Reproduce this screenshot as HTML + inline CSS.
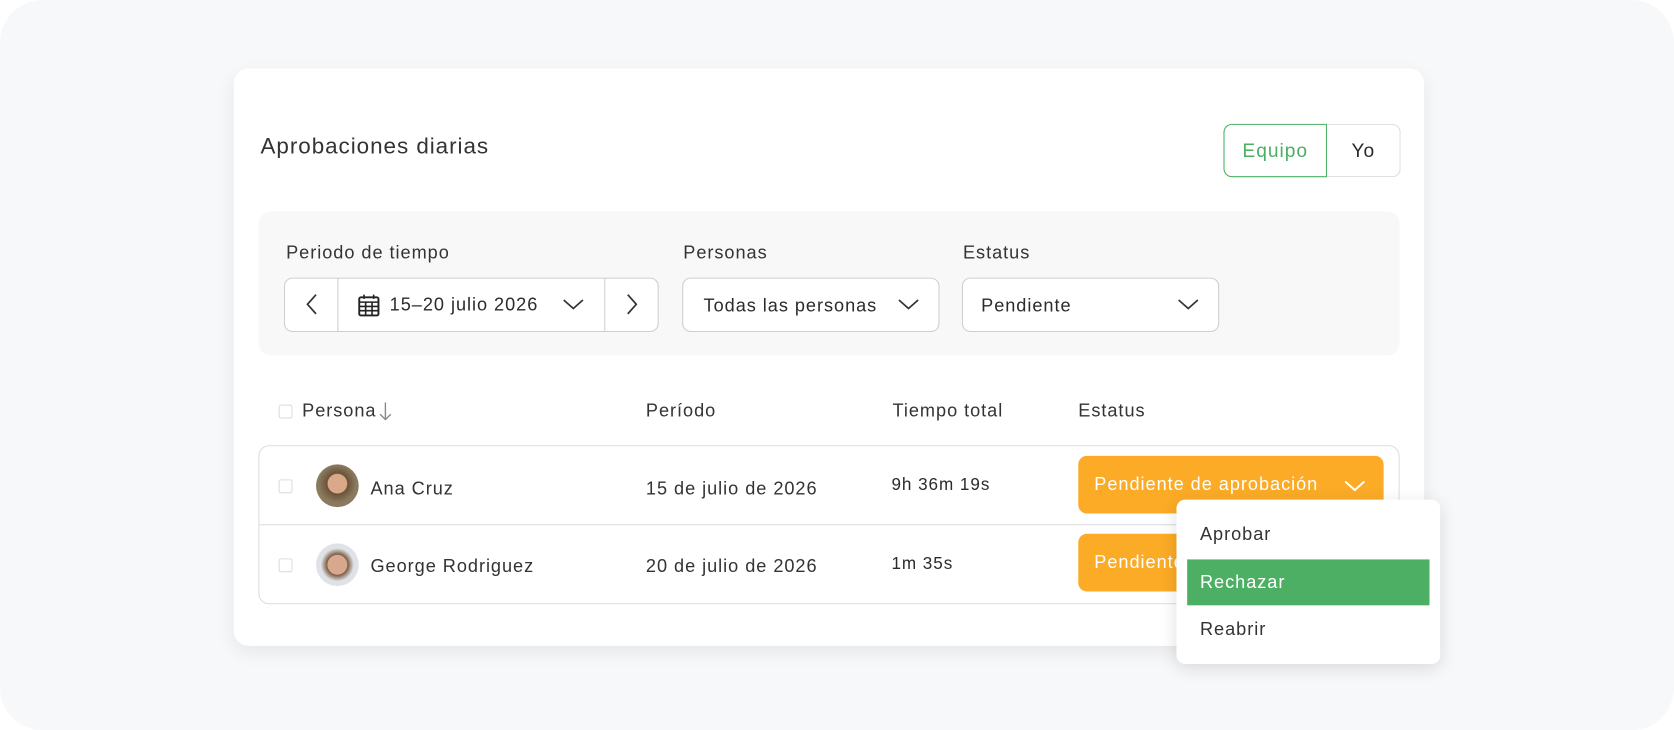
<!DOCTYPE html>
<html><head><meta charset="utf-8"><style>
*{box-sizing:border-box;margin:0;padding:0}
html,body{width:1674px;height:730px;overflow:hidden;background:#fff}
#w{position:absolute;left:0;top:0;width:1568px;height:684px;transform:scale(1.0676);transform-origin:0 0;font-family:"Liberation Sans",sans-serif;color:#2b2b2b;letter-spacing:0.9px}
.bg{position:absolute;left:0;top:0;width:1568px;height:684px;background:#f7f8fa;border-radius:40px}
.card{position:absolute;left:219px;top:64px;width:1115px;height:541px;background:#fff;border-radius:14px;box-shadow:0 6px 18px rgba(0,0,0,.07)}
.a{position:absolute;white-space:nowrap}
.t{font-size:17px;color:#333}
.box{position:absolute;border:1px solid #cfcfcf;border-radius:8px;background:#fff;height:51px}
.cb{position:absolute;width:13px;height:13px;border:1px solid #ddd;border-radius:2px}
.av{position:absolute;width:40px;height:40px;border-radius:50%}
.pill{position:absolute;background:#fbab26;border-radius:8px;color:#fff;font-size:17px}
</style></head><body><div id="w">
<div class="bg"></div>
<div class="card"></div>
<div class="a" style="left:244px;top:126px;font-size:21px;color:#333">Aprobaciones diarias</div>
<div class="a" style="left:1146px;top:116px;width:97px;height:50px;border:1.5px solid #4caf63;border-radius:8px 0 0 8px;color:#4caf63;font-size:18px;text-align:center;line-height:48px">Equipo</div>
<div class="a" style="left:1243px;top:116px;width:69px;height:50px;border:1.5px solid #ddd;border-left:none;border-radius:0 8px 8px 0;font-size:18px;text-align:center;line-height:48px">Yo</div>
<div class="a" style="left:242px;top:198px;width:1069px;height:135px;background:#f8f8f8;border-radius:12px"></div>
<div class="a t" style="left:268px;top:227px">Periodo de tiempo</div>
<div class="a t" style="left:640px;top:227px">Personas</div>
<div class="a t" style="left:902px;top:227px">Estatus</div>
<div class="box" style="left:266px;top:260px;width:351px"></div>
<div class="a" style="left:316px;top:260px;width:1px;height:51px;background:#cfcfcf"></div>
<div class="a" style="left:566px;top:260px;width:1px;height:51px;background:#cfcfcf"></div>
<svg class="a" style="left:284px;top:274px" width="16" height="22"><path d="M12 2L4 11l8 9" fill="none" stroke="#333" stroke-width="1.6"/></svg>
<svg class="a" style="left:584px;top:274px" width="16" height="22"><path d="M4 2l8 9-8 9" fill="none" stroke="#333" stroke-width="1.6"/></svg>
<svg class="a" style="left:335px;top:275px" width="21" height="22"><rect x="1.5" y="3.5" width="18" height="17" rx="1.5" fill="none" stroke="#222" stroke-width="1.8"/><path d="M1.5 8h18M1.5 12h18M1.5 16h18M7.5 8v12M13.5 8v12M6 1v4M15 1v4" stroke="#222" stroke-width="1.5"/></svg>
<div class="a" style="left:365px;top:276px;font-size:17px">15–20 julio 2026</div>
<svg class="a" style="left:526px;top:278px" width="22" height="14"><path d="M2 3l9 8 9-8" fill="none" stroke="#333" stroke-width="1.6"/></svg>
<div class="box" style="left:639px;top:260px;width:241px"></div>
<div class="a" style="left:659px;top:277px;font-size:17px">Todas las personas</div>
<svg class="a" style="left:840px;top:278px" width="22" height="14"><path d="M2 3l9 8 9-8" fill="none" stroke="#333" stroke-width="1.6"/></svg>
<div class="box" style="left:901px;top:260px;width:241px"></div>
<div class="a" style="left:919px;top:277px;font-size:17px">Pendiente</div>
<svg class="a" style="left:1102px;top:278px" width="22" height="14"><path d="M2 3l9 8 9-8" fill="none" stroke="#333" stroke-width="1.6"/></svg>
<div class="cb" style="left:261px;top:379px"></div>
<div class="a t" style="left:283px;top:375px">Persona</div>
<svg class="a" style="left:354px;top:376px" width="14" height="20"><path d="M7 1v16M2 12l5 5 5-5" fill="none" stroke="#888" stroke-width="1.3"/></svg>
<div class="a t" style="left:605px;top:375px">Período</div>
<div class="a t" style="left:836px;top:375px">Tiempo total</div>
<div class="a t" style="left:1010px;top:375px">Estatus</div>
<div class="a" style="left:242px;top:417px;width:1069px;height:149px;border:1px solid #ddd;border-radius:10px"></div>
<div class="a" style="left:243px;top:491px;width:1067px;height:1px;background:#ddd"></div>
<div class="cb" style="left:261px;top:449px"></div>
<div class="cb" style="left:261px;top:523px"></div>
<div class="av" style="left:296px;top:435px;background:radial-gradient(circle at 50% 45%,#d9a98a 0 30%,#6b5238 32%,#8a7a5f 60%)"></div>
<div class="av" style="left:296px;top:509px;background:radial-gradient(circle at 50% 50%,#d8a88e 0 32%,#7a5a40 34%,#dfe3e8 55%)"></div>
<div class="a t" style="left:347px;top:448px">Ana Cruz</div>
<div class="a t" style="left:347px;top:521px">George Rodriguez</div>
<div class="a t" style="left:605px;top:448px">15 de julio de 2026</div>
<div class="a t" style="left:605px;top:521px">20 de julio de 2026</div>
<div class="a" style="left:835px;top:446px;font-size:16px">9h 36m 19s</div>
<div class="a" style="left:835px;top:520px;font-size:16px">1m 35s</div>
<div class="pill" style="left:1010px;top:427px;width:286px;height:54px"><span class="a" style="left:15px;top:17px">Pendiente de aprobación</span><svg class="a" style="left:248px;top:21px" width="22" height="14"><path d="M2 3l9 8 9-8" fill="none" stroke="#fff" stroke-width="1.8"/></svg></div>
<div class="pill" style="left:1010px;top:500px;width:140px;height:54px;overflow:hidden"><span class="a" style="left:15px;top:17px">Pendiente</span></div>
<div class="a" style="left:1102px;top:468px;width:247px;height:154px;background:#fff;border-radius:8px;box-shadow:0 4px 16px rgba(0,0,0,.12)"></div>
<div class="a t" style="left:1124px;top:491px">Aprobar</div>
<div class="a" style="left:1112px;top:524px;width:227px;height:43px;background:#4caf63"></div>
<div class="a" style="left:1124px;top:536px;font-size:17px;color:#fff">Rechazar</div>
<div class="a t" style="left:1124px;top:580px">Reabrir</div>
</div></body></html>
